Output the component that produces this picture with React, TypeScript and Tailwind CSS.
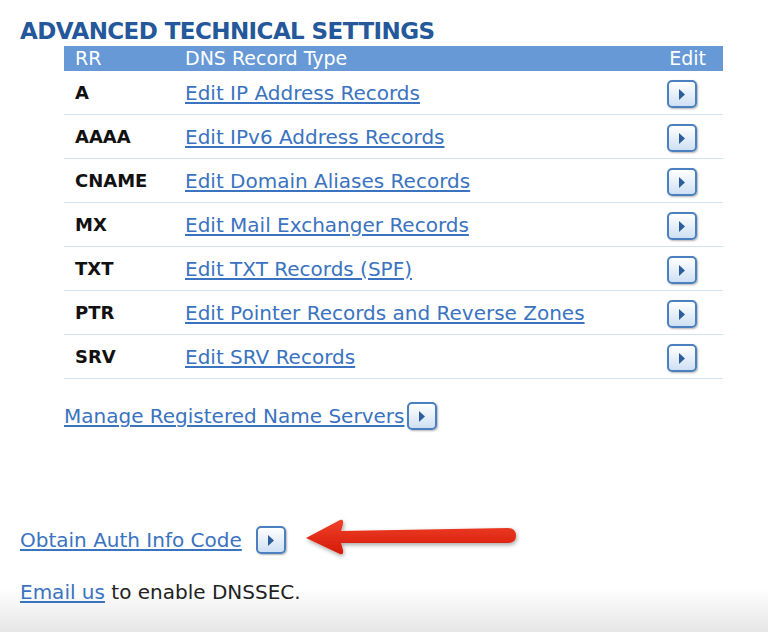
import React from 'react';

const rows = [
  ['A', 'Edit IP Address Records'],
  ['AAAA', 'Edit IPv6 Address Records'],
  ['CNAME', 'Edit Domain Aliases Records'],
  ['MX', 'Edit Mail Exchanger Records'],
  ['TXT', 'Edit TXT Records (SPF)'],
  ['PTR', 'Edit Pointer Records and Reverse Zones'],
  ['SRV', 'Edit SRV Records'],
];

const GoButton = () => (
  <span className="inline-flex items-center justify-center w-[30px] h-[28px] rounded-[5px] border-2 border-[#4a7fc0] bg-gradient-to-b from-white to-[#cfe0f3] shadow-[1px_1px_2px_rgba(0,0,0,0.3)]">
    <svg width="10" height="13" viewBox="0 0 10 13">
      <path d="M2 1 L8 6.5 L2 12 Z" fill="#2c5e9e" />
    </svg>
  </span>
);

export default function App() {
  return (
    <div
      className="relative w-[768px] h-[632px] overflow-hidden bg-gradient-to-b from-white from-[93%] to-[#e6e6e6] text-[20px] text-[#222]"
      style={{ fontFamily: '"DejaVu Sans", Verdana, sans-serif' }}
    >
      <div className="pt-[17px] pl-[20px]">
        <h1 className="text-[23px] font-bold text-[#24589a] leading-[28px] tracking-tight">
          ADVANCED TECHNICAL SETTINGS
        </h1>
        <div className="ml-[44px] w-[659px] mt-[1px]">
          <div className="flex items-center h-[25px] bg-[#6699d6] text-white text-[19px] px-[11px]">
            <span className="w-[110px]">RR</span>
            <span className="flex-1">DNS Record Type</span>
            <span className="pr-[6px]">Edit</span>
          </div>
          {rows.map(([rr, label]) => (
            <div key={rr} className="flex items-center h-[44px] border-b border-[#d3e2f2] px-[11px]">
              <span className="w-[110px] font-bold text-[18px] text-[#111]">{rr}</span>
              <a className="flex-1 text-[#3a73c0] underline underline-offset-2">{label}</a>
              <span className="pr-[15px] pt-[2px]"><GoButton /></span>
            </div>
          ))}
          <div className="flex items-center gap-[3px] mt-[22px]">
            <a className="text-[#3a73c0] underline underline-offset-2">Manage Registered Name Servers</a>
            <GoButton />
          </div>
        </div>
        <div className="flex items-center gap-[14px] mt-[94px]">
          <a className="text-[#3a73c0] underline underline-offset-2">Obtain Auth Info Code</a>
          <GoButton />
        </div>
        <p className="mt-[22px]">
          <a className="text-[#3a73c0] underline underline-offset-2">Email us</a> to enable DNSSEC.
        </p>
      </div>
      <svg className="absolute left-[300px] top-[514px]" width="225" height="50" viewBox="0 0 225 50">
        <defs>
          <filter id="sh" x="-10%" y="-30%" width="120%" height="160%">
            <feDropShadow dx="1" dy="2" stdDeviation="2" floodColor="#000" floodOpacity="0.35" />
          </filter>
          <linearGradient id="rg" x1="0" y1="0" x2="0" y2="1">
            <stop offset="0" stopColor="#f0402a" />
            <stop offset="1" stopColor="#d41a08" />
          </linearGradient>
        </defs>
        <path
          d="M6 24 L40 6 Q44 5 43 10 L41 17 L208 14 Q216 14 216 22 Q216 29 208 29 L41 29 L43 36 Q44 41 40 40 Z"
          fill="url(#rg)"
          filter="url(#sh)"
        />
      </svg>
    </div>
  );
}
